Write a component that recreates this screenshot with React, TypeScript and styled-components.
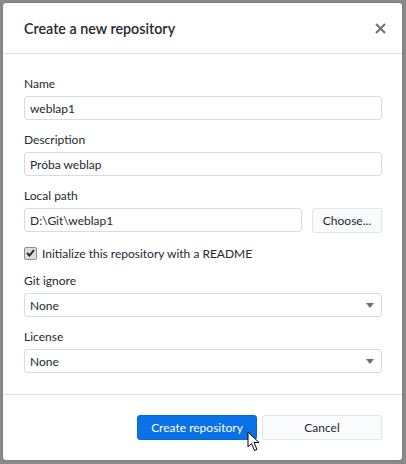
import React from "react";
import styled, { createGlobalStyle } from "styled-components";

const Global = createGlobalStyle`
  html, body { margin: 0; padding: 0; background: #8a8a8a; }
  body { width: 406px; height: 464px; overflow: hidden; font-family: "Lato", "Open Sans", sans-serif; }
`;

const Page = styled.div`
  padding: 3px 4px 0 3px;
`;

const Dialog = styled.div`
  position: relative;
  width: 399px;
  height: 457px;
  background: #fff;
  border-radius: 3px;
  box-shadow: 0 0 2px rgba(0,0,0,0.25);
  display: flex;
  flex-direction: column;
  box-sizing: border-box;
`;

const Header = styled.div`
  height: 50px;
  display: flex;
  align-items: center;
  justify-content: space-between;
  padding: 0 15px 0 21px;
  border-bottom: 1px solid #e1e4e8;
  flex-shrink: 0;
`;

const Title = styled.h1`
  margin: 0;
  font-size: 14.3px;
  font-weight: 600;
  color: #24292e;
`;

const Close = styled.button`
  border: 0;
  background: none;
  padding: 0;
  width: 14px;
  height: 14px;
  display: flex;
  align-items: center;
  justify-content: center;
`;

const Body = styled.div`
  flex: 1;
  padding: 22px 20px 0 21px;
  display: flex;
  flex-direction: column;
`;

const Field = styled.div`
  display: flex;
  flex-direction: column;
  margin-bottom: 12px;
`;

const Label = styled.label`
  font-size: 12px;
  color: #24292e;
  line-height: 16px;
  margin-bottom: 4px;
`;

const Row = styled.div`
  display: flex;
  gap: 10px;
`;

const Input = styled.div`
  flex: 1 1 auto;
  height: 24px;
  box-sizing: border-box;
  border: 1px solid #d8dbdf;
  border-radius: 3px;
  padding: 0 5px;
  display: flex;
  align-items: center;
  justify-content: space-between;
  font-size: 12px;
  color: #24292e;
`;

const Caret = styled.span`
  width: 0;
  height: 0;
  border-left: 4px solid transparent;
  border-right: 4px solid transparent;
  border-top: 5px solid #6a737d;
  margin-right: 2px;
`;

const SecondaryButton = styled.button<{ $w: number }>`
  width: ${(p) => p.$w}px;
  height: 25px;
  box-sizing: border-box;
  border: 1px solid #e1e4e8;
  border-radius: 3px;
  background: #fafbfc;
  color: #24292e;
  font-family: inherit;
  font-size: 12px;
  padding: 0;
`;

const CheckRow = styled.div`
  display: flex;
  align-items: center;
  gap: 5px;
  height: 16px;
  font-size: 12px;
  color: #24292e;
  margin-bottom: 12px;
`;

const Box = styled.span`
  width: 13px;
  height: 13px;
  box-sizing: border-box;
  border: 1px solid #8f8f8f;
  border-radius: 2px;
  background: #dcdcdc;
  display: flex;
  align-items: center;
  justify-content: center;
`;

const Footer = styled.div`
  height: 66px;
  border-top: 1px solid #e1e4e8;
  display: flex;
  justify-content: flex-end;
  align-items: flex-start;
  padding: 20px 20px 0 0;
  gap: 5px;
  flex-shrink: 0;
  box-sizing: border-box;
`;

const PrimaryButton = styled.button`
  width: 120px;
  height: 25px;
  border: 1px solid #0366d6;
  border-radius: 3px;
  background: #0a72e6;
  color: #fff;
  font-family: inherit;
  font-size: 12px;
  padding: 0;
`;

const Cursor = styled.svg`
  position: absolute;
  left: 247px;
  top: 431px;
`;

export default function App() {
  return (
    <>
      <Global />
      <Page>
        <Dialog>
          <Header>
            <Title>Create a new repository</Title>
            <Close aria-label="close">
              <svg width="11" height="11" viewBox="0 0 11 11">
                <path d="M1 1L10 10M10 1L1 10" stroke="#6a737d" strokeWidth="2" />
              </svg>
            </Close>
          </Header>
          <Body>
            <Field>
              <Label>Name</Label>
              <Input>weblap1</Input>
            </Field>
            <Field>
              <Label>Description</Label>
              <Input>Próba weblap</Input>
            </Field>
            <Field>
              <Label>Local path</Label>
              <Row>
                <Input>D:\Git\weblap1</Input>
                <SecondaryButton $w={70}>Choose...</SecondaryButton>
              </Row>
            </Field>
            <CheckRow>
              <Box>
                <svg width="9" height="8" viewBox="0 0 9 8">
                  <path d="M1 4L3.5 6.5L8 1" stroke="#222" strokeWidth="1.9" fill="none" />
                </svg>
              </Box>
              Initialize this repository with a README
            </CheckRow>
            <Field>
              <Label>Git ignore</Label>
              <Input>
                None
                <Caret />
              </Input>
            </Field>
            <Field>
              <Label>License</Label>
              <Input>
                None
                <Caret />
              </Input>
            </Field>
          </Body>
          <Footer>
            <PrimaryButton>Create repository</PrimaryButton>
            <SecondaryButton $w={120}>Cancel</SecondaryButton>
          </Footer>
        </Dialog>
      </Page>
      <Cursor width="14" height="21" viewBox="0 0 14 21">
        <path d="M1 1L1 16L4.5 12.5L7.5 19.5L10 18.5L7 11.5L12 11.5Z" fill="#fff" stroke="#000" strokeWidth="1" strokeLinejoin="miter" />
      </Cursor>
    </>
  );
}
